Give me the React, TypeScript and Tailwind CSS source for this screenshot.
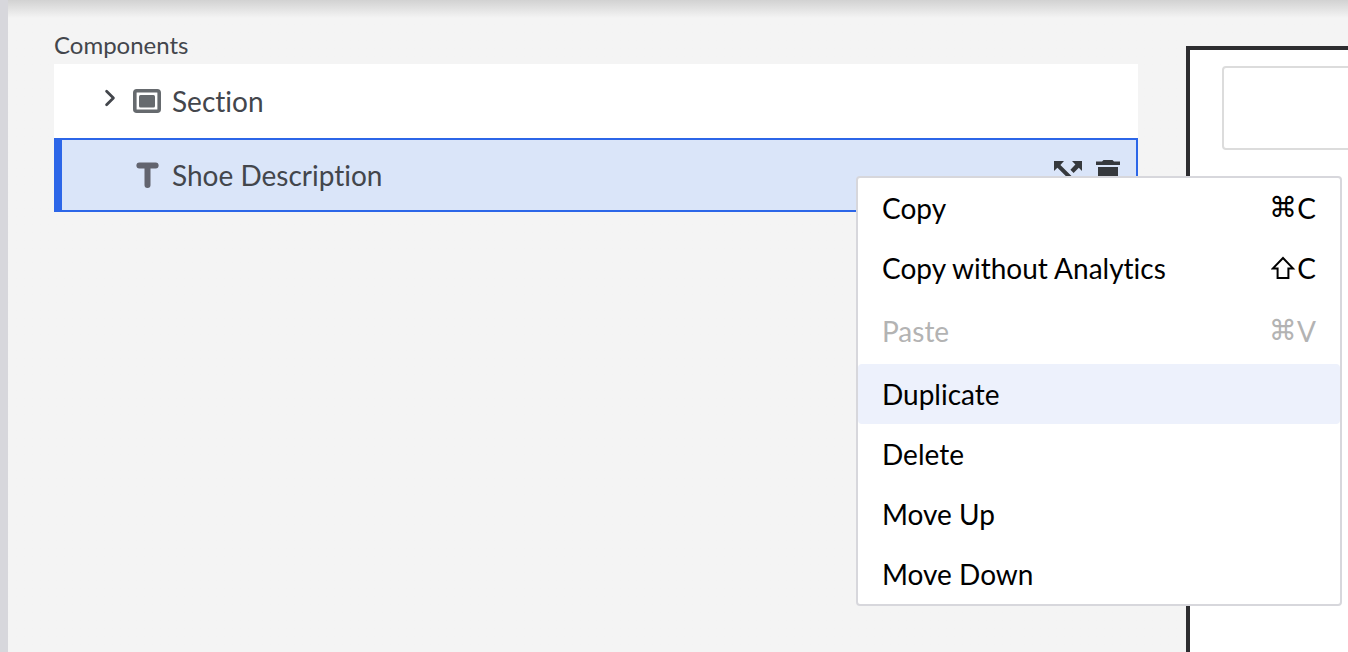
import type { ReactNode } from 'react';
import clsx from 'clsx';

const menuItems = [
  { label: 'Copy', mod: 'cmd', keyName: 'C' },
  { label: 'Copy without Analytics', mod: 'shift', keyName: 'C' },
  { label: 'Paste', mod: 'cmd', keyName: 'V', disabled: true },
  { label: 'Duplicate', active: true },
  { label: 'Delete' },
  { label: 'Move Up' },
  { label: 'Move Down' },
];

function ChevronIcon() {
  return (
    <svg viewBox="0 0 16 20" className="h-5 w-4" fill="none" stroke="#43464c" strokeWidth="2.8" strokeLinecap="round" strokeLinejoin="round">
      <path d="M4.6 3.2 L11.4 10 L4.6 16.8" />
    </svg>
  );
}

function SectionIcon() {
  return (
    <svg viewBox="0 0 28 24" className="h-6 w-7">
      <rect x="1.8" y="1.8" width="24.4" height="20.4" rx="2" fill="none" stroke="#666a6e" strokeWidth="3.6" />
      <rect x="6" y="6" width="16" height="12.4" rx="1.5" fill="#666a6e" />
    </svg>
  );
}

function TextIcon() {
  return (
    <svg viewBox="0 0 28 28" className="h-7 w-7" fill="none" stroke="#62646f" strokeLinecap="round">
      <path d="M6.4 4.4 H22.6" strokeWidth="6" />
      <path d="M14.5 6 V24" strokeWidth="6" />
    </svg>
  );
}

function ExpandIcon() {
  return (
    <svg viewBox="0 0 28 28" className="h-7 w-7" fill="#36393d">
      <path d="M0 0 H10 L6.4 4 L24 21.6 L28 18 V28 H18 L21.4 24.4 L3.4 6.8 L0 10 Z" />
      <path d="M28 0 V10 L24.8 6.8 L19.6 12 L16.4 8.8 L21.4 3.4 L18 0 Z" />
      <path d="M0 28 V18 L3.2 21.2 L8.4 16 L11.6 19.2 L6.6 24.6 L10 28 Z" />
    </svg>
  );
}

function TrashIcon() {
  return (
    <svg viewBox="0 0 24 30" className="h-[30px] w-6" fill="#36393d">
      <path d="M0 1.5 H6 L7.5 0 H16.5 L18 1.5 H24 V5 H0 Z" />
      <path d="M2 7 H22 V27 A3 3 0 0 1 19 30 H5 A3 3 0 0 1 2 27 Z" />
    </svg>
  );
}

function ShiftIcon() {
  return (
    <svg viewBox="0 0 26 24" className="h-6 w-[26px]" fill="none" stroke="currentColor" strokeWidth="2" role="img" aria-label="Shift">
      <path d="M12 2 L22 12.4 H17.4 V22 H6.6 V12.4 H2 Z" />
    </svg>
  );
}

function TreeRow({ icon, label, toggle, selected, children }: {
  icon: ReactNode;
  label: string;
  toggle?: boolean;
  selected?: boolean;
  children?: ReactNode;
}) {
  return (
    <div
      className={clsx(
        'flex h-[74px] items-center gap-[11px]',
        selected ? 'border-2 border-l-8 border-[#2c66e8] bg-[#dae5f9] pl-10 pr-4' : 'bg-white pl-12'
      )}
    >
      <div className="flex w-5 pb-1.5">
        {toggle && (
          <button type="button" aria-label={`Expand ${label}`}>
            <ChevronIcon />
          </button>
        )}
      </div>
      <span className="shrink-0">{icon}</span>
      <span className="flex-1 text-[28px] leading-9">{label}</span>
      {children}
    </div>
  );
}

function ContextMenu() {
  return (
    <div role="menu" className="absolute -right-[204px] top-[38px] z-10 w-[486px] rounded-sm border-2 border-[#d7d7dc] bg-white text-black">
      {menuItems.map((item) => (
        <button
          key={item.label}
          type="button"
          role="menuitem"
          disabled={item.disabled}
          className={clsx(
            'flex h-[60px] w-full items-center justify-between rounded-sm px-6 text-[28px] leading-9',
            item.active && 'bg-[#edf1fc]',
            item.disabled && 'my-[3px] text-[#b3b3b3]'
          )}
        >
          <span>{item.label}</span>
          {item.mod && (
            <span className="flex items-center">
              {item.mod === 'shift' ? (
                <ShiftIcon />
              ) : (
                <span className="font-['DejaVu_Sans',sans-serif]">⌘</span>
              )}
              <span>{item.keyName}</span>
            </span>
          )}
        </button>
      ))}
    </div>
  );
}

export default function App() {
  return (
    <div className="flex min-h-screen overflow-hidden bg-[#f4f4f4] font-[Lato,sans-serif] text-[#43464c] [font-variant-ligatures:none]">
      <div className="w-2 shrink-0 bg-[#d7d7dc]" />
      <main className="flex min-w-0 flex-1 gap-12 bg-linear-to-b from-[#d2d2d2] to-[#f4f4f4] to-[18px] pl-[46px]">
        <section className="flex-1 pt-[26px]">
          <h2 className="text-2xl leading-[38px]">Components</h2>
          <TreeRow icon={<SectionIcon />} label="Section" toggle />
          <div className="relative">
            <TreeRow icon={<TextIcon />} label="Shoe Description" selected>
              <div className="flex items-center gap-[14px]">
                <button type="button" aria-label="Expand">
                  <ExpandIcon />
                </button>
                <button type="button" aria-label="Delete component">
                  <TrashIcon />
                </button>
              </div>
            </TreeRow>
            <ContextMenu />
          </div>
        </section>
        <aside className="mt-[46px] w-[162px] shrink-0 overflow-hidden border-l-4 border-t-4 border-[#2d2d30] bg-white pl-8 pt-4">
          <input type="text" aria-label="Preview field" className="h-[84px] w-80 rounded-sm border-2 border-[#dcdcdc] bg-white px-4 text-[28px]" />
        </aside>
      </main>
    </div>
  );
}
